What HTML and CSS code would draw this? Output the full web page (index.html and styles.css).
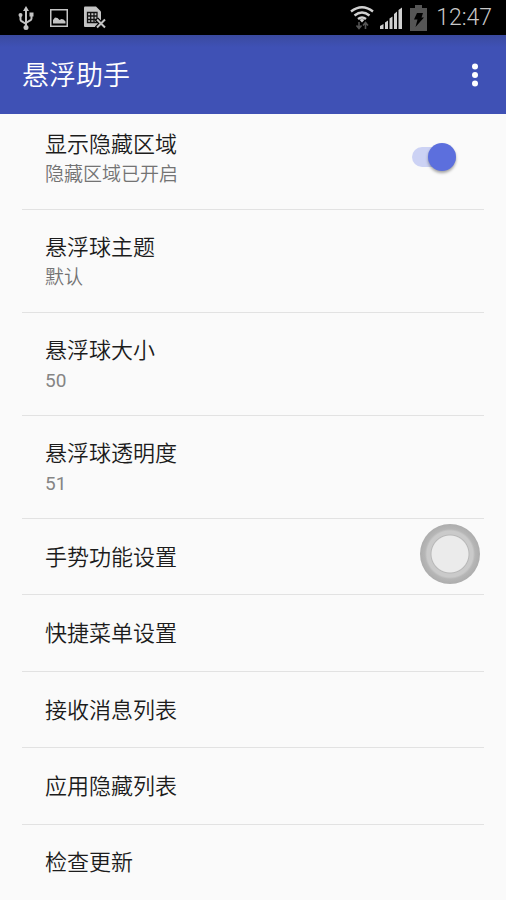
FILE: index.html
```
<!DOCTYPE html>
<html lang="zh-CN">
<head>
<meta charset="utf-8">
<meta name="viewport" content="width=device-width, initial-scale=1">
<title>悬浮助手</title>
<link rel="stylesheet" href="styles.css">
</head>
<body>
<div class="screen">
  <div class="status">
    <div class="status-left">
      <svg width="16" height="24" viewBox="0 0 16 24" fill="none" stroke="#c4c4c4" stroke-width="2">
        <path d="M8 3v17M2.500 10v3.500q0 1.500 1.500 2l4 2.500M13.500 9v3.500q0 1.500-1.500 2L8 17"/>
        <path d="M8 0l3 5H5z" fill="#c4c4c4" stroke="none"/>
        <circle cx="8" cy="21.500" r="2.500" fill="#c4c4c4" stroke="none"/>
        <circle cx="2.500" cy="9" r="2" fill="#c4c4c4" stroke="none"/>
        <path d="M11.500 6.500h4v4h-4z" fill="#c4c4c4" stroke="none"/>
      </svg>
      <svg width="18" height="18" viewBox="0 0 18 18">
        <path d="M.75.75h16.500v16.500H.75z" fill="none" stroke="#c4c4c4" stroke-width="1.500"/>
        <path d="M3 14.500v-3.500l2-2.500 2.500.5L9.500 11l2-1 2 .5 2 2v2z" fill="#c4c4c4"/>
      </svg>
      <svg width="22" height="23" viewBox="0 0 22 23">
        <path d="M1 .5h11l5 5V21H1q-1 0-1-1V1.500q0-1 1-1z" fill="#c4c4c4"/>
        <path d="M3.500 6.500H13v10H3.500zM3.500 10H13M3.500 13.500H13M6.700 6.500v10M10 6.500v10" fill="none" stroke="#111" stroke-width="1.300"/>
        <path d="M12.500 13l9 9M21.500 13l-9 9" stroke="#000" stroke-width="4.500"/>
        <path d="M13 13.500l8 8M21 13.500l-8 8" stroke="#c4c4c4" stroke-width="2"/>
      </svg>
    </div>
    <div class="status-right">
      <svg width="24" height="26" viewBox="0 0 24 26" fill="none" stroke="#d0d0d0" stroke-width="2.400">
        <path d="M1 6.500q11-8.500 22 0M4.500 10.500q7.500-6 15 0M8 14q4-3.200 8 0"/>
        <path d="M9.500 14.800q2.500-1.600 5 0L12 17.500z" fill="#d0d0d0" stroke="none"/>
        <path d="M9 17v6M6.500 20.500L9 23.500l2.500-3M15.500 24v-6M13 20.500l2.500-3 2.500 3" stroke="#555" stroke-width="1.600"/>
      </svg>
      <svg class="signal" width="22" height="22" viewBox="0 0 22 22" fill="#d0d0d0">
        <path d="M0 22v-3l3.500-2v5zM5 22v-6.500l3-2V22zM9.500 22V11.500l3-2V22zM14 22V7l3-2.500V22zM18.500 22V3L22 .5V22z"/>
      </svg>
      <svg class="battery" width="17" height="26" viewBox="0 0 17 26">
        <path d="M5 0h7v3h5v23H0V3h5z" fill="#555"/>
        <path d="M7 8h6l-1.500 4.500H14L5.500 22l2-7.500H4z" fill="#000"/>
      </svg>
      <time class="clock">12:47</time>
    </div>
  </div>
  <header class="bar">
    <h1>悬浮助手</h1>
    <button class="more" aria-label="更多选项">
      <svg width="8" height="24" viewBox="0 0 8 24" fill="#fff"><circle cx="4" cy="3.500" r="3"/><circle cx="4" cy="12" r="3"/><circle cx="4" cy="20.500" r="3"/></svg>
    </button>
  </header>
  <main class="list">
    <div class="row row-switch">
      <label class="texts" for="zone"><span class="title">显示隐藏区域</span><span class="sub">隐藏区域已开启</span></label>
      <input class="switch" id="zone" type="checkbox" role="switch" checked>
    </div>
    <button class="row"><span class="title">悬浮球主题</span><span class="sub">默认</span></button>
    <button class="row"><span class="title">悬浮球大小</span><span class="sub number">50</span></button>
    <button class="row"><span class="title">悬浮球透明度</span><span class="sub number">51</span></button>
    <button class="row single"><span class="title">手势功能设置</span></button>
    <button class="row single"><span class="title">快捷菜单设置</span></button>
    <button class="row single"><span class="title">接收消息列表</span></button>
    <button class="row single"><span class="title">应用隐藏列表</span></button>
    <button class="row single"><span class="title">检查更新</span></button>
  </main>
</div>
<button class="ball" aria-label="悬浮球"></button>
</body>
</html>
```
FILE: styles.css
```
* {
  box-sizing: border-box;
}

body {
  margin: 0;
  background: #fafafa;
  color: #1c1c1c;
  font-family: Roboto, "Noto Sans CJK SC", sans-serif;
  font-weight: 350;
}

button {
  border: 0;
  background: none;
  font: inherit;
  color: inherit;
  text-align: left;
}

svg {
  display: block;
}

.screen {
  display: flex;
  flex-direction: column;
  min-height: 100vh;
}

.status {
  display: flex;
  justify-content: space-between;
  align-items: center;
  height: 35px;
  padding: 0 14px 0 18px;
  background: #000;
}

.status-left,
.status-right {
  display: flex;
  align-items: center;
}

.status-left {
  gap: 16px;
}

.status-right {
  gap: 6px;
}

.battery {
  margin-left: 2px;
}

.clock {
  margin-left: 3px;
  color: #c8c8c8;
  font-size: 23px;
  line-height: 35px;
}

.bar {
  display: flex;
  justify-content: space-between;
  align-items: center;
  height: 79px;
  padding: 0 19px 0 22px;
  background: linear-gradient(#3a4a9f, #3f51b5 12px);
  color: #fff;
}

.bar h1 {
  margin: 0;
  padding-top: 2px;
  font-size: 27px;
  font-weight: 350;
  line-height: 40px;
}

.more {
  padding: 8px;
}

.list {
  display: flex;
  flex: 1;
  flex-direction: column;
  padding: 0 22px;
}

.row {
  display: flex;
  flex-direction: column;
  padding: 23px 23px 19px;
  border-top: 1px solid #e2e2e2;
}

.row-switch {
  flex-direction: row;
  align-items: flex-start;
  justify-content: space-between;
  padding-top: 16px;
  padding-right: 28px;
  border-top: 0;
}

.single {
  flex: 1;
  justify-content: center;
  padding-top: 2px;
  padding-bottom: 0;
}

.title,
.sub {
  display: block;
  line-height: 30px;
}

.title {
  font-size: 22px;
}

.sub {
  color: #737373;
  font-size: 19px;
}

.number {
  color: #858585;
  font-weight: 400;
}

.switch {
  appearance: none;
  display: flex;
  align-items: center;
  justify-content: flex-end;
  width: 44px;
  height: 20px;
  margin: 17px 0 0;
  border-radius: 10px;
  background: #ccd2f4;
}

.switch::before {
  content: "";
  width: 28px;
  height: 28px;
  border-radius: 50%;
  background: #5c6fdd;
  box-shadow: 0 2px 3px rgba(0, 0, 0, 0.35);
}

.switch:not(:checked) {
  justify-content: flex-start;
}

.ball {
  position: fixed;
  top: 524px;
  right: 26px;
  width: 60px;
  height: 60px;
  padding: 0;
  border-radius: 50%;
  background: radial-gradient(circle, #ebebeb 0 18px, #b8b8b8 19px, #cacaca 20px 23px, #b6b6b6 25px, #adadad 30px);
}
```
